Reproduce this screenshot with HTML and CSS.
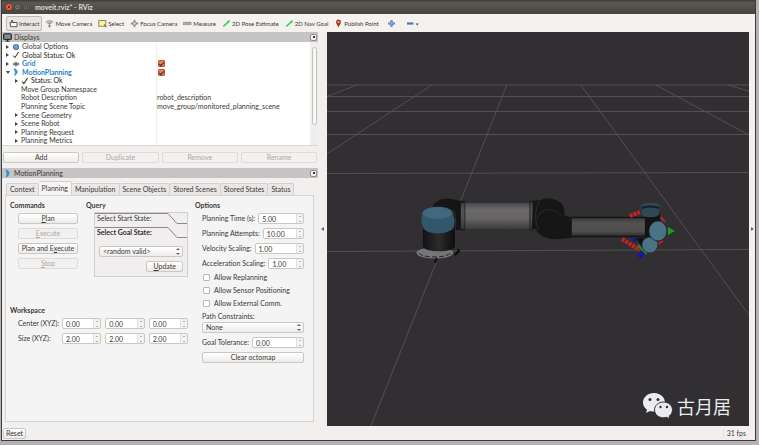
FILE: index.html
```html
<!DOCTYPE html>
<html lang="en">
<head>
  <meta charset="UTF-8">
  <meta name="viewport" content="width=device-width, initial-scale=1.0">
  <title>moveit.rviz* - RViz</title>
  <link rel="stylesheet" href="styles.css">
</head>
<body>
<div class="window">
  <header class="titlebar">
    <svg class="window-buttons" viewBox="0 0 26 10">
      <circle cx="5" cy="5" r="3.6" fill="#e8613c" stroke="#3a2a22" stroke-width=".6"/>
      <path d="M3.8 3.8l2.4 2.4M6.2 3.8L3.8 6.2" stroke="#5c2412" stroke-width=".9"/>
      <circle cx="13.6" cy="5" r="3.1" fill="#75736a" stroke="#33312c" stroke-width=".6"/>
      <path d="M12.2 5h2.8" stroke="#3c3b37" stroke-width=".9"/>
      <circle cx="22.2" cy="5" r="3.1" fill="#75736a" stroke="#33312c" stroke-width=".6"/>
      <rect x="21" y="3.9" width="2.4" height="2.2" fill="none" stroke="#3c3b37" stroke-width=".8"/>
    </svg>
    <h1 class="window-title">moveit.rviz* - RViz</h1>
  </header>

  <nav class="toolbar">
    <button class="tool tool-active">
      <svg class="icon" viewBox="0 0 9 9"><path d="M1 3.5h1.6v-2h1v2H8v4.2H1.6z" fill="#fff" stroke="#444" stroke-width=".9"/></svg>
      Interact
    </button>
    <button class="tool">
      <svg class="icon" viewBox="0 0 9 9"><path d="M1 3.4c2-2 5-2 7 0M2.5 4.6c1-1 3-1 4 0M4.5 4v4M3.2 6.7l1.3 1.3 1.3-1.3" fill="none" stroke="#8a8a8a" stroke-width="1.1"/></svg>
      Move Camera
    </button>
    <button class="tool">
      <svg class="icon" viewBox="0 0 9 9"><rect x=".8" y="1.6" width="7" height="5.6" fill="#f7f39a" stroke="#77763f" stroke-width=".8"/><path d="M6 5.5l2.5 2.4" stroke="#444" stroke-width="1"/></svg>
      Select
    </button>
    <button class="tool">
      <svg class="icon" viewBox="0 0 9 9"><path d="M4.5.8v7.4M.8 4.5h7.4" stroke="#8c8c8c" stroke-width="1.4"/><circle cx="4.5" cy="4.5" r="2" fill="#c8c8c8" stroke="#858585" stroke-width=".9"/></svg>
      Focus Camera
    </button>
    <button class="tool">
      <svg class="icon" viewBox="0 0 9 9"><rect x=".5" y="3.2" width="7.6" height="2.6" fill="#b5b4a2" stroke="#8d8c7e" stroke-width=".6"/><path d="M2.5 3.2v1.3M4.5 3.2v1.3M6.5 3.2v1.3" stroke="#77766a" stroke-width=".5"/></svg>
      Measure
    </button>
    <button class="tool">
      <svg class="icon" viewBox="0 0 9 9"><path d="M1.3 7.4L6.5 2.8" stroke="#2fd04a" stroke-width="1.5"/><path d="M5 2l3-.7-1 3z" fill="#2fd04a"/></svg>
      2D Pose Estimate
    </button>
    <button class="tool">
      <svg class="icon" viewBox="0 0 9 9"><path d="M1.3 7.4L6.5 2.8" stroke="#2fd04a" stroke-width="1.5"/><path d="M5 2l3-.7-1 3z" fill="#2fd04a"/></svg>
      2D Nav Goal
    </button>
    <button class="tool">
      <svg class="icon" viewBox="0 0 9 9"><path d="M4.5 8.5C3.8 6.2 2.1 5 2.1 3a2.4 2.4 0 0 1 4.8 0c0 2-1.7 3.2-2.4 5.5z" fill="#a8381f"/><circle cx="4.5" cy="2.9" r="1" fill="#e9b8a0"/></svg>
      Publish Point
    </button>
    <button class="tool tool-small" aria-label="Add tool">
      <svg class="icon" viewBox="0 0 9 9"><path d="M4.5 1.2v6.6M1.2 4.5h6.6" stroke="#3d6cb5" stroke-width="2.2"/><path d="M4.5 2.2v4.6M2.2 4.5h4.6" stroke="#90b2e4" stroke-width=".8"/></svg>
    </button>
    <button class="tool tool-small" aria-label="Remove tool">
      <svg class="icon icon-wide" viewBox="0 0 14 9"><path d="M1 4.5h6.4" stroke="#4a78bd" stroke-width="2.2"/><path d="M9.6 4.6h3.2l-1.6 2z" fill="#555"/></svg>
    </button>
  </nav>

  <main class="workarea">
    <div class="docks">
      <section class="dock">
        <div class="dock-title">
          <svg class="icon" viewBox="0 0 9 9"><rect x=".6" y=".8" width="7.8" height="5.8" rx=".6" fill="#777" stroke="#222" stroke-width="1"/><rect x="2" y="2" width="2.6" height="3.2" fill="#62a08e"/><rect x="4.6" y="2" width="2.4" height="3.2" fill="#a778b8"/><path d="M2.6 8.2h3.8M4.5 6.6v1.4" stroke="#222" stroke-width="1"/></svg>
          <h2>Displays</h2>
          <button class="dock-close" aria-label="Close Displays"></button>
        </div>
        <div class="tree-wrap">
          <div class="tree">
            <div class="row"><span class="arrow"></span><svg class="mark" viewBox="0 0 8 8"><circle cx="4" cy="4" r="2.5" fill="#78a6d4" stroke="#4379b0" stroke-width="1.2"/></svg><span class="name">Global Options</span></div>
            <div class="row"><span class="arrow"></span><svg class="mark" viewBox="0 0 8 8"><path d="M1.2 4.6l1.7 2L6.6 1" fill="none" stroke="#222" stroke-width="1"/></svg><span class="name dark">Global Status: Ok</span></div>
            <div class="row"><span class="arrow"></span><svg class="mark" viewBox="0 0 8 8"><ellipse cx="4" cy="4" rx="3.2" ry="1.8" fill="#999"/><path d="M.8 4h6.4M4 1.5v5" stroke="#555" stroke-width=".7"/></svg><label class="name display" for="show-grid">Grid</label><input class="tick" type="checkbox" id="show-grid" checked></div>
            <div class="row"><span class="arrow open"></span><svg class="mark" viewBox="0 0 8 8"><path d="M2 .8c3.6.4 4.6 4.6.6 6.6 1.2-2.2.8-4.6-.6-6.6z" fill="#2590d0" stroke="#2590d0" stroke-width=".8"/></svg><label class="name display" for="show-planning">MotionPlanning</label><input class="tick" type="checkbox" id="show-planning" checked></div>
            <div class="row child"><span class="arrow"></span><svg class="mark" viewBox="0 0 8 8"><path d="M1.2 4.6l1.7 2L6.6 1" fill="none" stroke="#1d4a1d" stroke-width="1.2"/></svg><span class="name dark">Status: Ok</span></div>
            <div class="row child"><span class="arrow none"></span><span class="name">Move Group Namespace</span></div>
            <div class="row child"><span class="arrow none"></span><span class="name">Robot Description</span><span class="value">robot_description</span></div>
            <div class="row child"><span class="arrow none"></span><span class="name">Planning Scene Topic</span><span class="value">move_group/monitored_planning_scene</span></div>
            <div class="row child"><span class="arrow"></span><span class="name">Scene Geometry</span></div>
            <div class="row child"><span class="arrow"></span><span class="name">Scene Robot</span></div>
            <div class="row child"><span class="arrow"></span><span class="name">Planning Request</span></div>
            <div class="row child"><span class="arrow"></span><span class="name">Planning Metrics</span></div>
          </div>
          <div class="scrollbar"><span class="thumb"></span></div>
        </div>
        <div class="dock-buttons">
          <button>Add</button>
          <button disabled>Duplicate</button>
          <button disabled>Remove</button>
          <button disabled>Rename</button>
        </div>
      </section>

      <section class="dock dock-planning">
        <div class="dock-title">
          <svg class="icon" viewBox="0 0 9 9"><path d="M2.6 1c4 .4 5 5 .6 7 1.3-2.4.8-5-.6-7z" fill="#2590d0" stroke="#2590d0" stroke-width=".8"/></svg>
          <h2>MotionPlanning</h2>
          <button class="dock-close" aria-label="Close MotionPlanning"></button>
        </div>
        <div class="tabs" role="tablist">
          <button role="tab" class="tab">Context</button>
          <button role="tab" class="tab tab-active" aria-selected="true">Planning</button>
          <button role="tab" class="tab">Manipulation</button>
          <button role="tab" class="tab">Scene Objects</button>
          <button role="tab" class="tab">Stored Scenes</button>
          <button role="tab" class="tab">Stored States</button>
          <button role="tab" class="tab">Status</button>
        </div>
        <div class="pane">
          <div class="commands">
            <h3>Commands</h3>
            <div class="command-list">
              <button><u>P</u>lan</button>
              <button disabled><u>E</u>xecute</button>
              <button>Plan and E<u>x</u>ecute</button>
              <button disabled><u>S</u>top</button>
            </div>
          </div>

          <div class="query">
            <h3>Query</h3>
            <div class="toolbox">
              <div class="toolbox-head">
                <svg viewBox="0 0 94 12" preserveAspectRatio="xMaxYMid slice"><path d="M-200 .5H75l9 10h12" fill="none" stroke="#8b8885"/></svg>
                <span>Select Start State:</span>
              </div>
              <div class="toolbox-head current">
                <svg viewBox="0 0 94 12" preserveAspectRatio="xMaxYMid slice"><path d="M-200 .5H75l9 10h12" fill="none" stroke="#8b8885"/></svg>
                <span>Select Goal State:</span>
              </div>
              <div class="toolbox-body">
                <div class="combo"><select aria-label="Goal state"><option>&lt;random valid&gt;</option></select></div>
                <button class="update"><u>U</u>pdate</button>
              </div>
            </div>
          </div>

          <div class="options">
            <h3>Options</h3>
            <div class="option-list">
              <div class="field"><label for="time">Planning Time (s):</label><span class="spin"><input type="number" id="time" value="5.00" step="0.01"></span></div>
              <div class="field"><label for="attempts">Planning Attempts:</label><span class="spin"><input type="number" id="attempts" value="10.00" step="0.01"></span></div>
              <div class="field"><label for="velocity">Velocity Scaling:</label><span class="spin"><input type="number" id="velocity" value="1.00" step="0.01"></span></div>
              <div class="field"><label for="acceleration">Acceleration Scaling:</label><span class="spin"><input type="number" id="acceleration" value="1.00" step="0.01"></span></div>
              <div class="checks">
                <label class="check"><input type="checkbox">Allow Replanning</label>
                <label class="check"><input type="checkbox">Allow Sensor Positioning</label>
                <label class="check"><input type="checkbox">Allow External Comm.</label>
              </div>
              <div class="constraint">
                <label for="constraints">Path Constraints:</label>
                <div class="combo"><select id="constraints"><option>None</option></select></div>
              </div>
              <div class="field"><label for="tolerance">Goal Tolerance:</label><span class="spin"><input type="number" id="tolerance" value="0.00" step="0.01"></span></div>
              <button>Clear octomap</button>
            </div>
          </div>

          <div class="workspace">
            <h3>Workspace</h3>
            <div class="xyz">
              <label for="center-x">Center (XYZ):</label>
              <span class="spin"><input type="number" id="center-x" value="0.00" step="0.01"></span>
              <span class="spin"><input type="number" aria-label="Center Y" value="0.00" step="0.01"></span>
              <span class="spin"><input type="number" aria-label="Center Z" value="0.00" step="0.01"></span>
              <label for="size-x">Size (XYZ):</label>
              <span class="spin"><input type="number" id="size-x" value="2.00" step="0.01"></span>
              <span class="spin"><input type="number" aria-label="Size Y" value="2.00" step="0.01"></span>
              <span class="spin"><input type="number" aria-label="Size Z" value="2.00" step="0.01"></span>
            </div>
          </div>
        </div>
      </section>
    </div>

    <div class="splitter"><span class="collapse"></span></div>

    <section class="view">
      <svg class="scene" viewBox="327 32 422 394" preserveAspectRatio="xMidYMid slice">
        <defs>
          <linearGradient id="tube" x1="0" y1="0" x2="0" y2="1">
            <stop offset="0" stop-color="#49484a"/><stop offset=".25" stop-color="#6b696a"/><stop offset=".6" stop-color="#656364"/><stop offset="1" stop-color="#3d3c3d"/>
          </linearGradient>
          <linearGradient id="forearm" x1="0" y1="0" x2="0" y2="1">
            <stop offset="0" stop-color="#3d3c3d"/><stop offset=".3" stop-color="#535152"/><stop offset=".75" stop-color="#4f4d4e"/><stop offset="1" stop-color="#2c2b2c"/>
          </linearGradient>
          <linearGradient id="body" x1="0" y1="0" x2="1" y2="0">
            <stop offset="0" stop-color="#121213"/><stop offset=".5" stop-color="#2c2b2c"/><stop offset="1" stop-color="#0d0d0e"/>
          </linearGradient>
        </defs>
        <!-- ground grid -->
        <g stroke="#5b595b" stroke-width=".8" fill="none">
          <path d="M327 85h422M327 96.500h422M327 111.500h422M327 134.500h422M327 173.500l422-1M327 251.500l422-2"/>
          <path d="M357 85l-30 11.500M432 85L327 154M507 85L371 426M581 85l168 230M656 85l93 50M728 85l21 6"/>
        </g>
        <!-- base -->
        <ellipse cx="435" cy="253" rx="18.500" ry="5.500" fill="#77757a"/>
        <path d="M419 253c3 5 28 6 33-1" fill="none" stroke="#222" stroke-width="1" stroke-dasharray="5 2"/>
        <path d="M458 249l1 2-4 4M437 258l-2 5" fill="none" stroke="#0b0b0b" stroke-width="2"/>
        <!-- shoulder and upper arm -->
        <path d="M432 209c2-8 9-11 17-10.500l12 2.500h3v29h-9l-8 2z" fill="#151516"/>
        <path d="M423 222h32v24c0 7-32 7-32 0z" fill="url(#body)"/>
        <path d="M422 214c0-9 30-10 31-1l2 8-1 6c-3 8-28 9-31 0l-1.500-5z" fill="#34566a"/>
        <ellipse cx="437.500" cy="213" rx="14.500" ry="6" fill="#41687c"/>
        <path d="M453 210c4 6 3 14 2 20" fill="none" stroke="#303031" stroke-width="1"/>
        <rect x="461" y="203" width="73" height="26" fill="url(#tube)"/>
        <path d="M461 201h4v29h-4M534 201h-4v29h4" fill="#28272855" stroke="#1d1c1d" stroke-width=".8"/>
        <!-- elbow and forearm -->
        <path d="M533 201l8-1c6-3 17-1 21 4 3 4 2 8 3 12l7 1v21l-13 1c-14 1-21-4-23-10h-4z" fill="#171617"/>
        <path d="M540 201c-5 6-6 21-1 29M537 219c4-12 18-12 24-3" fill="none" stroke="#343234" stroke-width=".8"/>
        <rect x="572" y="218" width="74" height="18" fill="url(#forearm)"/>
        <path d="M572 217.500h73M572 236.500h73" stroke="#161516" stroke-width="1.500"/>
        <!-- wrist with its interactive marker -->
        <path d="M630 216l10-4M622 239l18 11" stroke="#cf2020" stroke-width="4" stroke-dasharray="3 1"/>
        <path d="M661 217l4 5M658 244l5-3" stroke="#cf2020" stroke-width="2"/>
        <path d="M630 238l8 1-3 3zM637 255l4-4 4 4-4 4z" fill="#1515a5"/>
        <path d="M638 245l9 9" stroke="#1d8c2c" stroke-width="2"/>
        <path d="M645 213h15v18l-9 14-8 3-7-10h9z" fill="#131314"/>
        <path d="M641 205c3-3 16-3 19 0l-1 10c-3 3-14 3-17 0z" fill="#2f4856"/>
        <path d="M642 208c4-2 13-2 17 0" fill="none" stroke="#111c24" stroke-width="2"/>
        <circle cx="650" cy="245" r="8" fill="#4c7285" stroke="#1c2b33" stroke-width=".8"/>
        <ellipse cx="658" cy="231" rx="9" ry="10" fill="#4c7285" stroke="#1c2b33" stroke-width=".8"/>
        <path d="M668 227l7 4-7 4z" fill="#229d22"/>
      </svg>
      <div class="watermark">
        <svg viewBox="0 0 30 26">
          <path d="M11 0C4.900 0 0 4.200 0 9.500c0 3 1.500 5.500 4 7.200L3 20l4-2c1.300.4 2.600.6 4 .6 6 0 11-4 11-9.100S17 0 11 0z" fill="#ececee"/>
          <path d="M20.500 9c-5 0-9 3.500-9 7.900s4 7.900 9 7.900c1.100 0 2.100-.2 3.100-.5L27 26l-.9-2.900c2.100-1.500 3.400-3.700 3.400-6.200 0-4.400-4-7.900-9-7.900z" fill="#ececee" stroke="#312f31" stroke-width="1"/>
          <g fill="#312f31"><circle cx="7" cy="6.500" r="1.500"/><circle cx="15" cy="6.500" r="1.500"/><circle cx="17.500" cy="14" r="1.200"/><circle cx="24" cy="14" r="1.200"/></g>
        </svg>
        <span lang="zh">古月居</span>
      </div>
    </section>

    <div class="gutter"><span class="collapse"></span></div>
  </main>

  <footer class="statusbar">
    <button class="reset">Reset</button>
    <span class="fps">31 fps</span>
  </footer>
</div>
</body>
</html>
```
FILE: styles.css
```css
* {
  box-sizing: border-box;
}

body {
  height: 100vh;
  margin: 0;
  padding: 0 3px 4px 1px;
  background-color: #b4b2b4;
  font-family: Lato, "Noto Sans", sans-serif;
  font-size: 7px;
  line-height: 9px;
  color: #3a3836;
}

h1, h2, h3 {
  margin: 0;
  font-size: 7px;
  line-height: 9px;
}

button, input, select {
  font: inherit;
  color: inherit;
}

button {
  height: 11px;
  padding: 0 4px;
  border: 1px solid #cbc7c3;
  border-radius: 2px;
  background: linear-gradient(#ffffff, #eeecea);
  text-align: center;
}

button:disabled {
  color: #aaa7a5;
  border-color: #dedbd8;
  background: #f3f1f0;
}

.window {
  display: flex;
  flex-direction: column;
  height: 100%;
  border: solid #3c3b3c;
  border-width: 0 1px 1px;
  background-color: #f2f0ef;
}

/* title bar */
.titlebar {
  display: flex;
  align-items: center;
  gap: 5px;
  height: 14px;
  flex: none;
  padding: 0 2px;
  background: linear-gradient(#3d3c38, #5a5851 20%, #45443f);
  color: #dfdbd2;
}

.window-buttons {
  width: 26px;
  height: 10px;
}

/* toolbar */
.toolbar {
  display: flex;
  align-items: center;
  height: 18px;
  flex: none;
  padding: 0 4px;
  background-color: #f4f1ee;
}

.tool {
  display: flex;
  align-items: center;
  gap: 1px;
  height: 15px;
  padding: 0 2px;
  border-color: transparent;
  background: none;
  font-size: 6px;
  white-space: nowrap;
}

.tool-active {
  border-color: #bdb8b3;
  background: #e8e5e2;
}

.tool-small {
  padding: 0 4px;
}

.icon {
  width: 9px;
  height: 9px;
  flex: none;
}

.icon-wide {
  width: 14px;
}

.workarea {
  display: flex;
  flex: 1;
  min-height: 0;
}

/* docks */
.docks {
  display: flex;
  flex-direction: column;
  flex: 0 0 42%;
}

.dock-planning {
  display: flex;
  flex-direction: column;
  flex: 1;
  margin-top: 5px;
}

.dock-title {
  display: flex;
  align-items: center;
  gap: 2px;
  height: 10px;
  padding: 0 1px;
  background-color: #c5c3c3;
}

.dock-title h2 {
  flex: 1;
  font-weight: normal;
}

.dock-close {
  display: grid;
  place-items: center;
  width: 7px;
  height: 7px;
  padding: 0;
  border-color: #908d8b;
}

.dock-close::before {
  content: "";
  width: 2px;
  height: 2px;
  background-color: #333;
}

.tree-wrap {
  display: flex;
  height: 104px;
  background-color: #fff;
  border-bottom: 1px solid #d9d6d4;
}

.tree {
  display: grid;
  grid-template-rows: repeat(12, 1fr);
  flex: 1;
  background: linear-gradient(#eeeeee, #eeeeee) 154px 0 / 1px 100% no-repeat;
}

.row {
  display: grid;
  grid-template-columns: 8px 10px 135px 1fr;
  align-items: center;
  min-height: 0;
  padding-left: 2px;
}

.row > * {
  grid-row: 1;
}

.row .name {
  grid-column: 3;
}

.row .value,
.row .tick {
  grid-column: 4;
}

.row.child {
  grid-template-columns: 8px 10px 126px 1fr;
  padding-left: 11px;
}

.row.child .name {
  grid-column: 2 / 4;
}

.row.child .mark + .name {
  grid-column: 3;
}

.arrow {
  width: 0;
  height: 0;
  margin-left: 2px;
  border: solid transparent;
  border-width: 2px 0 2px 3px;
  border-left-color: #444;
}

.arrow.open {
  border-width: 3px 2px 0;
  border-color: #444 transparent;
}

.arrow.none {
  visibility: hidden;
}

.mark {
  width: 8px;
  height: 8px;
}

.dark {
  color: #1d1c1b;
}

.display {
  color: #2683c6;
  font-weight: bold;
}

input[type="checkbox"] {
  appearance: none;
  width: 7px;
  height: 7px;
  margin: 0;
  border: 1px solid #bdb9b6;
  border-radius: 1px;
  background-color: #fff;
}

input.tick {
  display: grid;
  place-items: center;
  margin-left: 1px;
  border-color: #b9593a;
  background-color: #e5805f;
}

.tick::before {
  content: "";
  width: 4px;
  height: 2px;
  border: solid #53241a;
  border-width: 0 0 1px 1px;
  transform: rotate(-45deg);
}

.scrollbar {
  width: 8px;
  padding: 5px 1px 20px 2px;
  background-color: #f0eeed;
}

.thumb {
  display: block;
  height: 100%;
  border: 1px solid #c4c0bd;
  border-radius: 3px;
  background-color: #f8f7f6;
}

.dock-buttons {
  display: grid;
  grid-template-columns: repeat(4, 1fr);
  gap: 3px;
  padding: 6px 1px 0;
}

/* tabs */
.tabs {
  display: flex;
  align-items: flex-end;
  height: 17px;
  flex: none;
  padding: 0 4px;
}

.tab {
  height: 12px;
  padding: 0 3px;
  border-color: #d2cfcc;
  border-bottom: 0;
  border-radius: 2px 2px 0 0;
  background: #eae8e6;
  white-space: nowrap;
}

.tab + .tab {
  border-left: 0;
}

.tab-active {
  height: 14px;
  background: #f6f5f5;
}

.pane {
  display: grid;
  grid-template-columns: 76px 109px 1fr;
  grid-template-rows: 105px 1fr;
  flex: 1;
  margin: 0 4px 4px 3px;
  padding: 5px 9px 0 4px;
  border: 1px solid #d6d3d1;
  background-color: #f5f4f4;
}

.command-list {
  display: grid;
  gap: 4px;
  margin: 3px 8px 0;
}

.command-list button {
  padding: 0;
}

.toolbox {
  height: 65px;
  margin: 2px 7px 0 8px;
  border: 1px solid #d2cfcc;
  background-color: #f0eeee;
}

.toolbox-head {
  position: relative;
  height: 14px;
  padding: 1px 2px 0;
}

.toolbox-head svg {
  position: absolute;
  top: 0;
  left: 0;
  width: 100%;
  height: 12px;
}

.current {
  color: #2e2c2b;
  font-weight: bold;
}

.toolbox-body {
  display: grid;
  gap: 4px;
  padding: 5px 4px 0;
  font-weight: normal;
}

.update {
  justify-self: end;
  padding: 0 6px;
}

.combo {
  display: flex;
  position: relative;
}

.combo select {
  appearance: none;
  width: 100%;
  height: 11px;
  padding: 0 3px;
  border: 1px solid #cbc7c3;
  border-radius: 2px;
  background: linear-gradient(#ffffff, #eeecea);
}

.combo::before,
.combo::after {
  content: "";
  position: absolute;
  right: 3px;
  border: solid transparent;
}

.combo::before {
  top: 2px;
  border-width: 0 2px 2px;
  border-bottom-color: #666;
}

.combo::after {
  bottom: 2px;
  border-width: 2px 2px 0;
  border-top-color: #666;
}

/* options */
.options {
  grid-column: 3;
  grid-row: 1 / 3;
}

.option-list {
  display: grid;
  gap: 4px;
  margin: 3px 0 0 7px;
}

.field {
  display: flex;
  gap: 3px;
  align-items: center;
  white-space: nowrap;
}

.field .spin {
  flex: 1;
}

.checks {
  display: grid;
  gap: 4px;
}

.check {
  display: flex;
  align-items: center;
  gap: 4px;
  margin-left: 1px;
  white-space: nowrap;
}

.constraint {
  display: grid;
  gap: 1px;
}

.spin {
  display: flex;
  position: relative;
  min-width: 0;
}

.spin input {
  appearance: textfield;
  width: 100%;
  min-width: 0;
  height: 11px;
  margin: 0;
  padding: 0 9px 0 3px;
  border: 1px solid #cbc7c3;
  border-radius: 2px;
  background: linear-gradient(90deg, #e2dfdc 1px, #f4f2f1 1px) right / 7px 100% no-repeat #fff;
}

.spin input::-webkit-inner-spin-button {
  display: none;
}

.spin::before,
.spin::after {
  content: "";
  position: absolute;
  right: 3px;
  border: solid transparent;
}

.spin::before {
  top: 3px;
  border-width: 0 1px 1px;
  border-bottom-color: #777;
}

.spin::after {
  bottom: 2px;
  border-width: 1px 1px 0;
  border-top-color: #777;
}

.workspace {
  grid-column: 1 / 3;
  grid-row: 2;
}

.xyz {
  display: grid;
  grid-template-columns: 40px repeat(3, 1fr);
  gap: 4px;
  align-items: center;
  margin: 3px 7px 0 8px;
  white-space: nowrap;
}

/* 3D view */
.splitter {
  display: flex;
  align-items: center;
  justify-content: center;
  flex: 0 0 9px;
}

.gutter {
  display: flex;
  align-items: center;
  justify-content: center;
  flex: 0 0 6px;
}

.collapse {
  border: solid transparent;
  border-width: 2px 3px 2px 0;
  border-right-color: #666;
}

.gutter .collapse {
  border-width: 2px 0 2px 3px;
  border-left-color: #666;
}

.view {
  position: relative;
  flex: 1;
  min-width: 0;
  background-color: #312f31;
}

.scene {
  display: block;
  width: 100%;
  height: 100%;
}

.watermark {
  display: flex;
  position: absolute;
  right: 18px;
  bottom: 7px;
  align-items: center;
  gap: 4px;
  color: #ececee;
  font-family: "Noto Sans CJK SC", sans-serif;
  font-size: 18px;
  line-height: 26px;
}

.watermark svg {
  width: 30px;
  height: 26px;
}

/* status bar */
.statusbar {
  display: flex;
  align-items: center;
  justify-content: space-between;
  height: 14px;
  flex: none;
  padding: 0 9px 0 1px;
}

.reset {
  padding: 0 2px;
}

.fps {
  padding-left: 3px;
  border-left: 1px solid #e2dfdd;
}
```
